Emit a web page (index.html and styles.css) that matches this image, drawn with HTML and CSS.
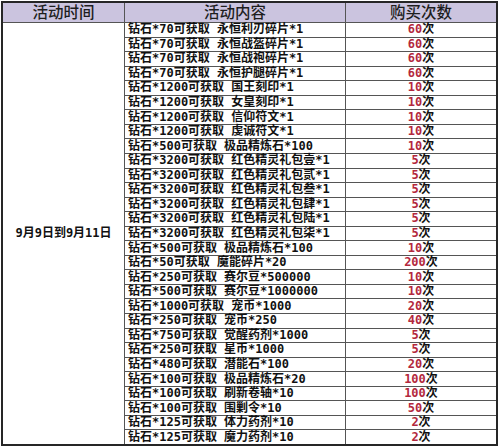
FILE: index.html
```html
<!DOCTYPE html>
<html lang="zh-CN">
<head>
<meta charset="utf-8">
<title>活动购买次数</title>
<link rel="stylesheet" href="styles.css">
</head>
<body>
<div class="sheet">
  <div class="hd">活动时间</div>
  <div class="hd">活动内容</div>
  <div class="hd">购买次数</div>
  <div class="date">9月9日到9月11日</div>

  <div class="item">钻石*70可获取 永恒利刃碎片*1</div><div class="count"><span class="num">60</span>次</div>
  <div class="item">钻石*70可获取 永恒战盔碎片*1</div><div class="count"><span class="num">60</span>次</div>
  <div class="item">钻石*70可获取 永恒战袍碎片*1</div><div class="count"><span class="num">60</span>次</div>
  <div class="item">钻石*70可获取 永恒护腿碎片*1</div><div class="count"><span class="num">60</span>次</div>
  <div class="item">钻石*1200可获取 国王刻印*1</div><div class="count"><span class="num">10</span>次</div>
  <div class="item">钻石*1200可获取 女皇刻印*1</div><div class="count"><span class="num">10</span>次</div>
  <div class="item">钻石*1200可获取 信仰符文*1</div><div class="count"><span class="num">10</span>次</div>
  <div class="item">钻石*1200可获取 虔诚符文*1</div><div class="count"><span class="num">10</span>次</div>
  <div class="item">钻石*500可获取 极品精炼石*100</div><div class="count"><span class="num">10</span>次</div>
  <div class="item">钻石*3200可获取 红色精灵礼包壹*1</div><div class="count"><span class="num">5</span>次</div>
  <div class="item">钻石*3200可获取 红色精灵礼包贰*1</div><div class="count"><span class="num">5</span>次</div>
  <div class="item">钻石*3200可获取 红色精灵礼包叁*1</div><div class="count"><span class="num">5</span>次</div>
  <div class="item">钻石*3200可获取 红色精灵礼包肆*1</div><div class="count"><span class="num">5</span>次</div>
  <div class="item">钻石*3200可获取 红色精灵礼包陆*1</div><div class="count"><span class="num">5</span>次</div>
  <div class="item">钻石*3200可获取 红色精灵礼包柒*1</div><div class="count"><span class="num">5</span>次</div>
  <div class="item">钻石*500可获取 极品精炼石*100</div><div class="count"><span class="num">10</span>次</div>
  <div class="item">钻石*50可获取 魔能碎片*20</div><div class="count"><span class="num">200</span>次</div>
  <div class="item">钻石*250可获取 赛尔豆*500000</div><div class="count"><span class="num">10</span>次</div>
  <div class="item">钻石*500可获取 赛尔豆*1000000</div><div class="count"><span class="num">10</span>次</div>
  <div class="item">钻石*1000可获取 宠币*1000</div><div class="count"><span class="num">20</span>次</div>
  <div class="item">钻石*250可获取 宠币*250</div><div class="count"><span class="num">40</span>次</div>
  <div class="item">钻石*750可获取 觉醒药剂*1000</div><div class="count"><span class="num">5</span>次</div>
  <div class="item">钻石*250可获取 星币*1000</div><div class="count"><span class="num">5</span>次</div>
  <div class="item">钻石*480可获取 潜能石*100</div><div class="count"><span class="num">20</span>次</div>
  <div class="item">钻石*100可获取 极品精炼石*20</div><div class="count"><span class="num">100</span>次</div>
  <div class="item">钻石*100可获取 刷新卷轴*10</div><div class="count"><span class="num">100</span>次</div>
  <div class="item">钻石*100可获取 围剿令*10</div><div class="count"><span class="num">50</span>次</div>
  <div class="item">钻石*125可获取 体力药剂*10</div><div class="count"><span class="num">2</span>次</div>
  <div class="item">钻石*125可获取 魔力药剂*10</div><div class="count"><span class="num">2</span>次</div>
</div>
</body>
</html>
```

FILE: styles.css
```css
html, body {
  margin: 0;
  padding: 0;
  background: #ffffff;
}

.sheet {
  margin: 1px 0 0 1px;
  width: 493px;
  height: 441px;
  border: 2px solid #262626;
  background: #555555;
  display: grid;
  grid-template-columns: 121px 220px 150px;
  grid-template-rows: 19px repeat(29, 1fr);
  gap: 1px;
  font-family: "DejaVu Sans Mono", "Noto Sans CJK SC", sans-serif;
  font-size: 12px;
  color: #111111;
}

.hd {
  background: #cbc4df;
  display: flex;
  align-items: center;
  justify-content: center;
  font-size: 15.5px;
  line-height: 16px;
  color: #1e1e1e;
  font-weight: 500;
}

.date {
  grid-column: 1;
  grid-row: 2 / span 29;
  background: #ffffff;
  display: flex;
  align-items: center;
  justify-content: center;
  font-weight: bold;
  line-height: 13px;
}

.item {
  background: #ffffff;
  display: flex;
  align-items: center;
  padding-left: 3px;
  font-weight: bold;
  line-height: 13px;
  white-space: nowrap;
}

.count {
  background: #ffffff;
  display: flex;
  align-items: center;
  justify-content: center;
  font-weight: bold;
  line-height: 13px;
  white-space: nowrap;
}

.num {
  color: #b3283d;
}
```
